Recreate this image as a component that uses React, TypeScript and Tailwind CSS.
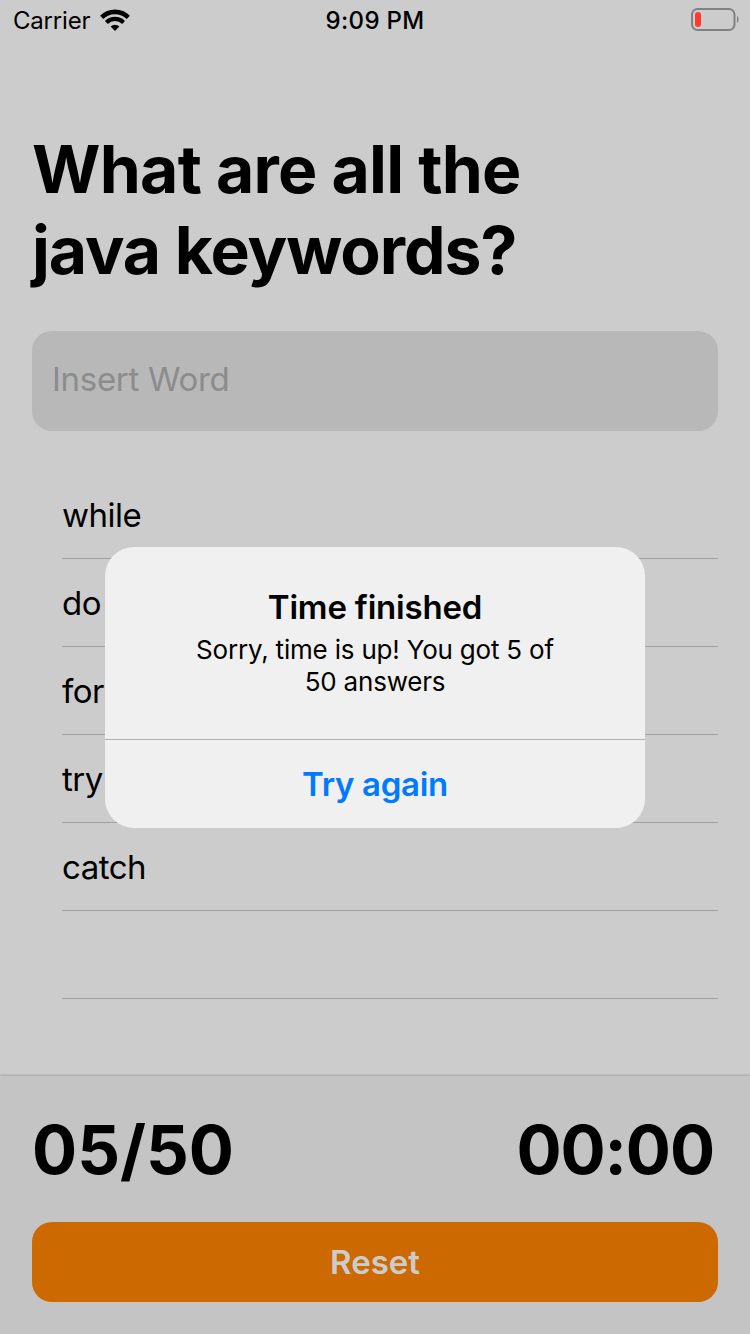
import React from "react";

const words = ["while", "do", "for", "try", "catch", ""];

function StatusBar() {
  return (
    <header className="grid h-10 grid-cols-3 items-center pr-[11px] pl-[13px] text-[24px]">
      <div className="flex items-center gap-[10px] pt-px">
        <span className="tracking-[-0.2px]">Carrier</span>
        <svg className="mb-0.5" width="30" height="22" viewBox="0 0 30 22" fill="none" stroke="black" strokeWidth="4.6">
          <path d="M1.7 8.3a19.1 19.1 0 0 1 26.6 0" />
          <path d="M6.4 13.4a12.4 12.4 0 0 1 17.2 0" strokeWidth="4.2" />
          <path d="M15 22l-4.4-4.4a6.3 6.3 0 0 1 8.8 0z" fill="black" stroke="none" />
        </svg>
      </div>
      <span className="pt-px pr-0.5 text-center font-medium tracking-[0.3px]">9:09 PM</span>
      <svg className="justify-self-end" width="48" height="24" viewBox="0 0 48 24">
        <rect x="1" y="1" width="42.5" height="21" rx="5.5" fill="none" stroke="#818181" strokeWidth="2" />
        <rect x="4" y="4" width="6" height="15" rx="3" fill="#ff3b30" />
        <path d="M46 8c2 1 2 6 0 7z" fill="#818181" />
      </svg>
    </header>
  );
}

export default function App() {
  return (
    <div className="relative flex h-[1334px] w-[750px] flex-col bg-[#ccc] font-['Inter','Liberation_Sans',sans-serif] text-black">
      <StatusBar />
      <main className="flex flex-1 flex-col px-8 pt-[89px]">
        <h1 className="text-[66px] leading-[81px] font-bold">
          <span className="block tracking-[-0.75px]">What are all the</span>
          <span className="block tracking-[-1.05px]">java keywords?</span>
        </h1>
        <div className="mt-10 flex h-[100px] items-center rounded-[20px] bg-[#b8b8b8] px-5 pb-[3px] text-[33px] tracking-[-0.3px] text-[#8c8c8c]">
          Insert Word
        </div>
        <ul className="mt-10 ml-[30px]">
          {words.map((word, i) => (
            <li key={i} className="flex h-[88px] items-center border-b border-[#a0a0a0] pt-0.5 text-[33px] tracking-[-0.5px]">
              {word}
            </li>
          ))}
        </ul>
      </main>
      <footer className="h-[258px] bg-[#c4c4c4] px-8 pt-[34px] shadow-[0_-1px_2px_rgba(0,0,0,0.2)]">
        <div className="flex h-20 items-center justify-between pr-1 text-[67px] font-bold">
          <span>05/50</span>
          <span className="tracking-[-1.1px]">00:00</span>
        </div>
        <button className="mt-8 flex h-20 w-full items-center justify-center rounded-[20px] bg-[#cc6900] pt-0.5 text-[33px] font-semibold text-[#ccc]">
          Reset
        </button>
      </footer>
      <div className="absolute top-[547px] left-[105px] flex h-[281px] w-[540px] flex-col rounded-[29px] bg-[#f0f0f0] text-center">
        <div className="h-[193px] border-b border-[#b0b0b0] pt-[39px]">
          <h2 className="text-[33px] leading-[42px] font-semibold tracking-[-0.2px]">Time finished</h2>
          <p className="mt-[6px] text-[26px] leading-8 tracking-[-0.2px]">
            Sorry, time is up! You got 5 of
            <br />
            50 answers
          </p>
        </div>
        <button className="flex-1 pt-0.5 text-[33px] font-semibold tracking-[-0.3px] text-[#007aff]">Try again</button>
      </div>
    </div>
  );
}
